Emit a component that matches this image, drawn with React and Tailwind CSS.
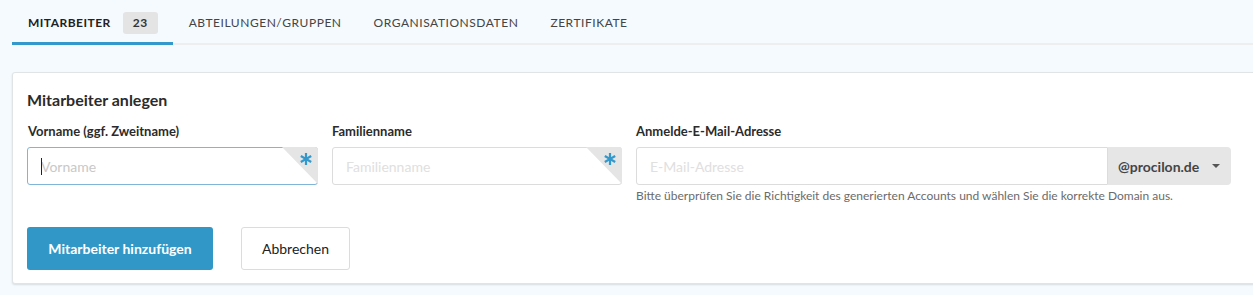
import React from 'react';

function RequiredCorner() {
    return (
        <div className="pointer-events-none absolute right-0 top-0 h-[37px] w-[36px] overflow-hidden rounded-tr-[3px]">
            <svg className="absolute inset-0" width="36" height="37" viewBox="0 0 36 37">
                <polygon points="0,0 36,0 36,37" fill="#e5e5e5" />
                <g stroke="#3399cc" strokeWidth="2.2" strokeLinecap="butt">
                    <line x1="24" y1="6" x2="24" y2="18" />
                    <line x1="18.8" y1="9" x2="29.2" y2="15" />
                    <line x1="18.8" y1="15" x2="29.2" y2="9" />
                </g>
            </svg>
        </div>
    );
}

function Tab({ label, active, badge }) {
    return (
        <div
            className={
                'flex h-[45px] items-center gap-[12px] text-[12px] ' +
                (active
                    ? 'border-b-[3px] border-[#3399cc] pl-4 pr-[15px] pt-[3px] font-bold tracking-[0.04em] text-[#222]'
                    : 'px-4 pt-[1px] tracking-[0.045em] text-[#444]')
            }
        >
            <span>{label}</span>
            {badge && (
                <span className="rounded-[3px] bg-[#e4e4e4] px-[10px] py-[2px] text-[12px] font-bold text-[#333]">{badge}</span>
            )}
        </div>
    );
}

export default function App() {
    return (
        <div className="min-h-[295px] bg-[#f5faff] pl-3" style={{ fontFamily: 'Lato, "Noto Sans", sans-serif' }}>
            <div className="flex items-end border-b-2 border-[#eeeeee]">
                <div className="-mb-[2px] flex">
                    <Tab label="MITARBEITER" active badge="23" />
                    <Tab label="ABTEILUNGEN/GRUPPEN" />
                    <Tab label="ORGANISATIONSDATEN" />
                    <Tab label="ZERTIFIKATE" />
                </div>
            </div>

            <div className="mt-[27px] -mr-[20px] rounded-[3px] border border-[#e1e4e6] bg-white px-[14px] pb-[13px] pt-[17px] shadow-[0_1px_2px_rgba(0,0,0,0.12)]">
                <h2 className="text-[16px] font-bold leading-[20px] text-[#2b2b2b]">Mitarbeiter anlegen</h2>

                <div className="mt-[13px] flex gap-[14px]">
                    <div className="w-[291px]">
                        <label className="block pl-[1px] text-[13px] font-bold leading-[16px] text-[#2b2b2b]">Vorname (ggf. Zweitname)</label>
                        <div className="relative mt-[8px]">
                            <input
                                placeholder="Vorname"
                                className="h-[38px] w-full rounded-[3px] border border-[#7fb5d8] bg-white px-[13px] text-[14px] text-[#333] outline-none placeholder:text-[#c8c8c8]"
                            />
                            <span className="absolute left-[14px] top-[11px] h-[17px] w-px bg-[#222]" />
                            <RequiredCorner />
                        </div>
                    </div>
                    <div className="w-[290px]">
                        <label className="block text-[13px] font-bold leading-[16px] text-[#2b2b2b]">Familienname</label>
                        <div className="relative mt-[8px]">
                            <input
                                placeholder="Familienname"
                                className="h-[38px] w-full rounded-[3px] border border-[#dcdcdc] bg-white px-[13px] text-[14px] text-[#333] outline-none placeholder:text-[#e0e0e0]"
                            />
                            <RequiredCorner />
                        </div>
                    </div>
                    <div className="w-[595px]">
                        <label className="block text-[13px] font-bold leading-[16px] text-[#2b2b2b]">Anmelde-E-Mail-Adresse</label>
                        <div className="mt-[8px] flex h-[38px]">
                            <input
                                placeholder="E-Mail-Adresse"
                                className="h-full flex-1 rounded-l-[3px] border border-[#dcdcdc] bg-white px-[13px] text-[14px] text-[#333] outline-none placeholder:text-[#e0e0e0]"
                            />
                            <div className="flex w-[123px] items-center gap-[13px] rounded-r-[4px] bg-[#e6e6e6] pl-[10px] text-[14px] font-bold text-[#444]">
                                <span>@procilon.de</span>
                                <svg width="8" height="5" viewBox="0 0 8 5">
                                    <polygon points="0,0 8,0 4,4" fill="#555" />
                                </svg>
                            </div>
                        </div>
                        <p className="mt-[4px] text-[12px] leading-[14px] text-[#6b6b6b]">
                            Bitte überprüfen Sie die Richtigkeit des generierten Accounts und wählen Sie die korrekte Domain aus.
                        </p>
                    </div>
                </div>

                <div className="mt-[24px] flex gap-[28px]">
                    <button className="h-[43px] w-[186px] rounded-[3px] bg-[#3197c7] text-[14px] font-bold text-white">
                        Mitarbeiter hinzufügen
                    </button>
                    <button className="h-[43px] w-[109px] rounded-[3px] border border-[#dcdcdc] bg-white text-[14px] text-[#222]">
                        Abbrechen
                    </button>
                </div>
            </div>
        </div>
    );
}
